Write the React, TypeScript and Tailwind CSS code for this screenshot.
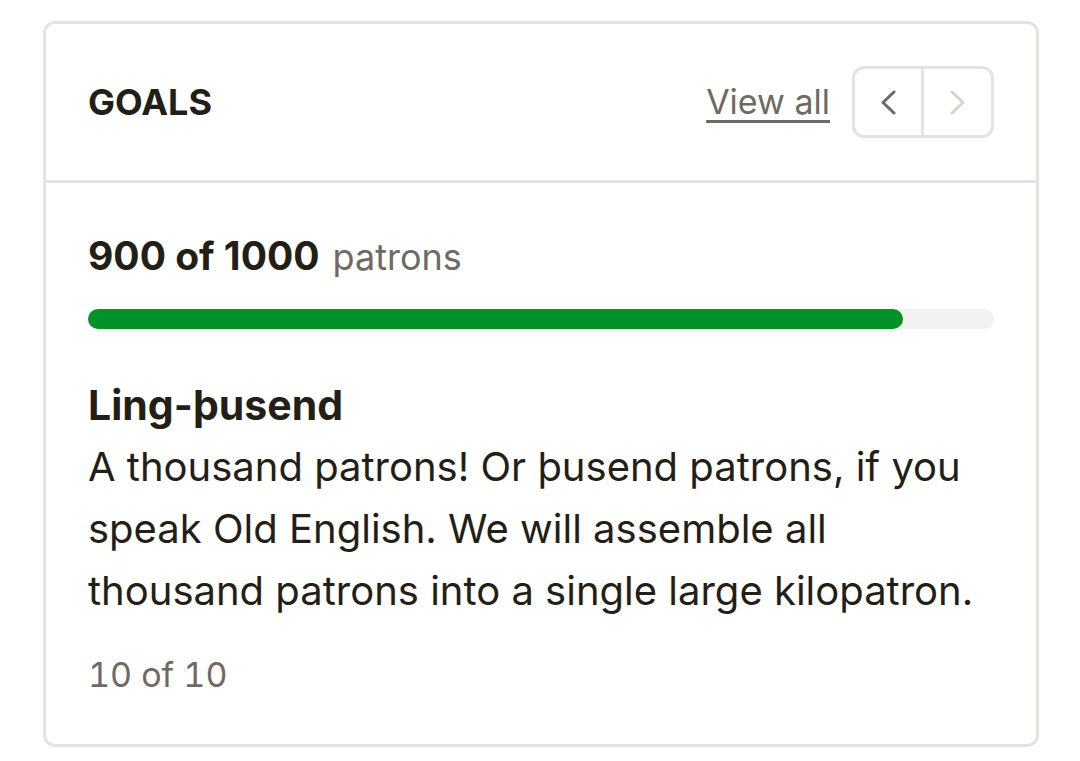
import { useState } from "react";

const goal = {
  current: 900,
  target: 1000,
  title: "Ling-þusend",
  body: "A thousand patrons! Or þusend patrons, if you speak Old English. We will assemble all thousand patrons into a single large kilopatron.",
  index: 10,
  total: 10,
};

export default function App() {
  const [index] = useState(goal.index);
  const pct = Math.round((goal.current / goal.target) * 100);

  return (
    <main
      className="min-h-screen bg-white pl-[43px] pt-[21px]"
      style={{ fontFamily: "Inter, 'Noto Sans', sans-serif" }}
    >
      <section className="w-[996px] rounded-[12px] border-[3px] border-[#e5e3df] bg-white">
        <header className="flex h-[159px] items-center justify-between border-b-[3px] border-[#e5e3df] px-[42px]">
          <h2 className="text-[36px] font-bold leading-[44px] text-[#241f16]">
            GOALS
          </h2>
          <div className="flex items-center gap-[22px]">
            <a
              href="#"
              className="text-[34px] leading-[44px] text-[#6e6a63] underline decoration-[3px] underline-offset-[6px]"
            >
              View all
            </a>
            <div className="flex h-[72px] overflow-hidden rounded-[12px] border-[3px] border-[#e5e3df]">
              <button className="flex w-[69px] items-center justify-center border-r-[3px] border-[#e5e3df] text-[#6e6a63]">
                <Chevron dir="left" />
              </button>
              <button className="flex w-[67px] items-center justify-center text-[#d6d3ce]">
                <Chevron dir="right" />
              </button>
            </div>
          </div>
        </header>

        <div className="px-[42px] pt-[49px] pb-[45px]">
          <p className="flex items-baseline gap-[13px] leading-[48px] text-[#241f16]">
            <span className="text-[39px] font-bold">
              {goal.current} of {goal.target}
            </span>
            <span className="text-[36px] text-[#6e6a63]">patrons</span>
          </p>

          <div className="mt-[28px] h-[20px] w-full rounded-full bg-[#f3f2f0]">
            <div
              className="h-full rounded-full bg-[#03922a]"
              style={{ width: `${pct}%` }}
            />
          </div>

          <h3 className="mt-[45px] text-[41px] font-bold leading-[62px] text-[#241f16]">
            {goal.title}
          </h3>
          <p className="text-[40px] leading-[62px] text-[#241f16]">
            {goal.body}
          </p>
          <p className="mt-[29px] text-[34px] leading-[48px] tabular-nums text-[#6e6a63]">
            {index} of {goal.total}
          </p>
        </div>
      </section>
    </main>
  );
}

function Chevron({ dir }: { dir: "left" | "right" }) {
  return (
    <svg width="16" height="25" viewBox="0 0 16 25" fill="none">
      <path
        d={dir === "left" ? "M14 2 L3 12.5 L14 23" : "M2 2 L13 12.5 L2 23"}
        stroke="currentColor"
        strokeWidth="3"
        strokeLinecap="round"
        strokeLinejoin="round"
      />
    </svg>
  );
}
